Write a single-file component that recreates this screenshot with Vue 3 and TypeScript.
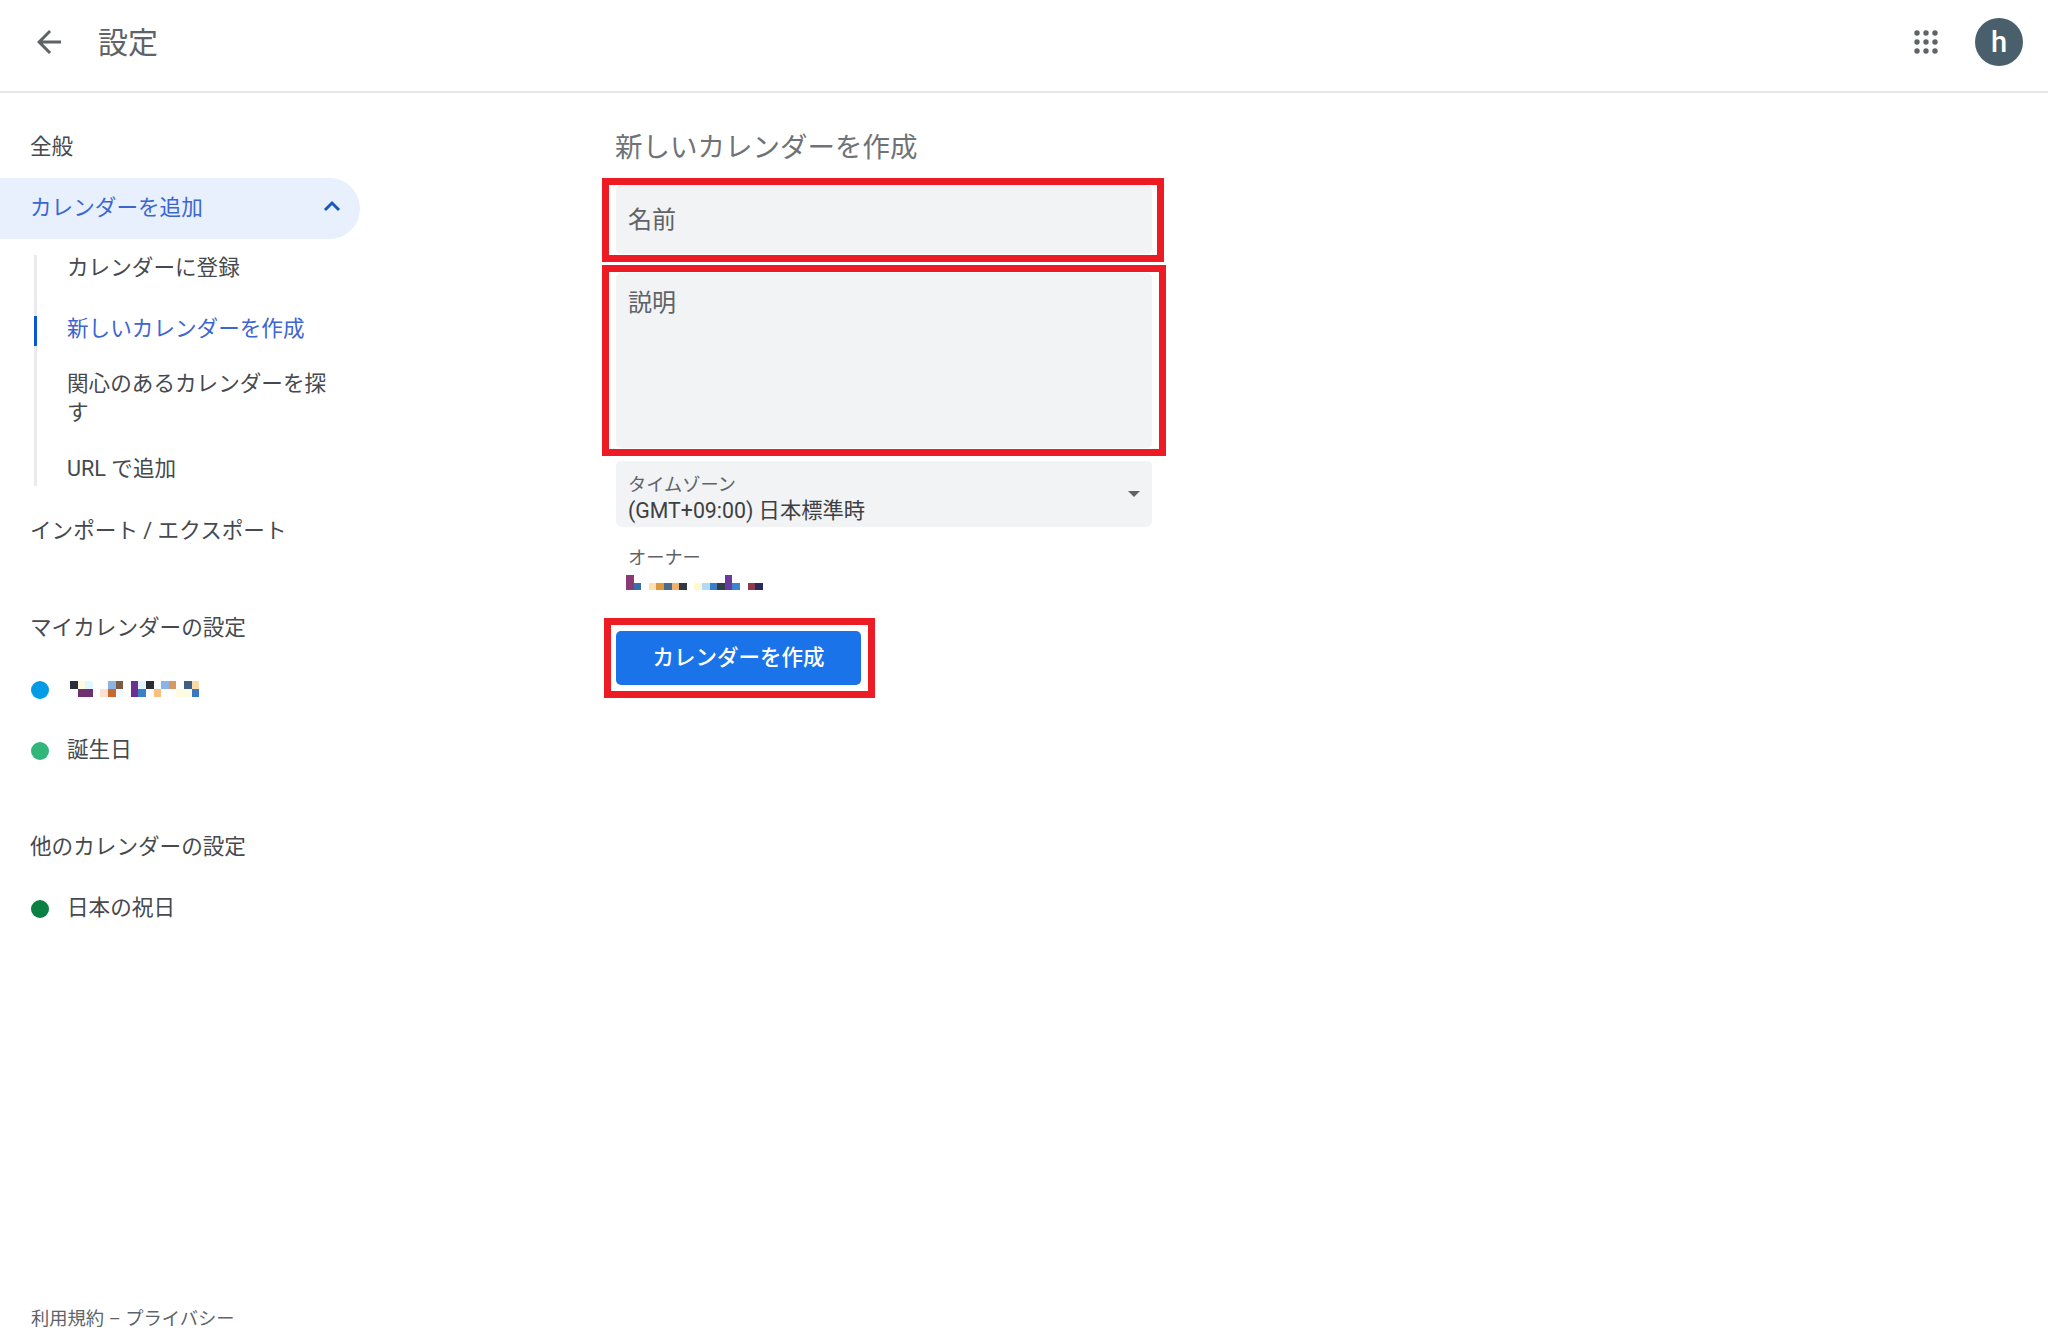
<script setup lang="ts">
type Row = (string | null)[]

const sideMosaic: Row[] = [
  ['#2a3038','#fffbe0','#e0f8ff',null,null,'#8ab4e0','#7a5a40',null,'#6b2f90','#e0f5ff','#2a2d33',null,'#8ab4e5','#d9985f',null,'#3f5f85','#fad9a8'],
  [null,'#6f2f70','#6f2f70',null,'#fde0d0','#c86a30','#f0fbff',null,'#6b2f90','#3a80c8',null,'#f8c080',null,null,'#fffbe0','#fffbe0','#3a78c0'],
]
const ownerMosaic: Row[] = [
  ['#8a3a75',null,null,null,null,null,null,null,null,null,null,null,null,'#6b3a9e',null,null,null,null],
  ['#8a3a75','#3b6cb0',null,'#fde2b0','#e0953f','#4a6a90','#f0b070','#2f3a40',null,'#fff9cc','#b0daf8','#3a80c8','#333f48','#6b3a9e','#3a85d0',null,'#8f3a4a','#2a2a60'],
]
const subItems = [
  { label: 'カレンダーに登録', active: false },
  { label: '新しいカレンダーを作成', active: true },
  { label: '関心のあるカレンダーを探す', active: false },
  { label: 'URL で追加', active: false },
]
const dots = Array.from({ length: 9 }, (_, i) => ({ cx: 3 + (i % 3) * 9, cy: 3 + Math.floor(i / 3) * 9 }))
</script>

<template>
  <div class="page">
    <header class="top">
      <button class="back" aria-label="戻る">
        <svg width="36" height="36" viewBox="0 0 24 24"><path fill="#5f6368" d="M20 11H7.83l5.59-5.59L12 4l-8 8 8 8 1.41-1.41L7.83 13H20v-2z" /></svg>
      </button>
      <h1 class="page-title">設定</h1>
      <div class="top-right">
        <svg class="apps" width="24" height="24" viewBox="0 0 24 24">
          <circle v-for="(d, i) in dots" :key="i" :cx="d.cx" :cy="d.cy" r="2.7" fill="#5f6368" />
        </svg>
        <div class="avatar">h</div>
      </div>
    </header>

    <div class="body">
      <aside class="side">
        <nav>
          <div class="item">全般</div>
          <div class="item open">
            <span>カレンダーを追加</span>
            <svg class="chev" width="18" height="12" viewBox="0 0 18 12"><path d="M2 10l7-7 7 7" fill="none" stroke="#185abc" stroke-width="3" /></svg>
          </div>
          <div class="sub">
            <div v-for="s in subItems" :key="s.label" class="sub-item" :class="{ active: s.active }">
              <span>{{ s.label }}</span>
            </div>
          </div>
          <div class="item">インポート / エクスポート</div>

          <div class="item section-first">マイカレンダーの設定</div>
          <div class="item cal">
            <i class="dot blue"></i>
            <div class="mosaic">
              <template v-for="(row, r) in sideMosaic" :key="r">
                <b v-for="(c, k) in row" :key="k" :style="{ background: c ?? 'transparent' }"></b>
              </template>
            </div>
          </div>
          <div class="item cal"><i class="dot green"></i><span>誕生日</span></div>

          <div class="item section-other">他のカレンダーの設定</div>
          <div class="item cal"><i class="dot dark"></i><span>日本の祝日</span></div>
        </nav>
        <footer class="foot">利用規約 – プライバシー</footer>
      </aside>

      <main class="main">
        <h2 class="heading">新しいカレンダーを作成</h2>

        <div class="marked name-wrap">
          <input class="field name" placeholder="名前" />
          <div class="mark mark-name"></div>
        </div>
        <div class="marked desc-wrap">
          <textarea class="field desc" placeholder="説明"></textarea>
          <div class="mark mark-desc"></div>
        </div>

        <div class="select">
          <div class="select-text">
            <div class="small">タイムゾーン</div>
            <div class="value">(GMT+09:00) 日本標準時</div>
          </div>
          <span class="caret"></span>
        </div>

        <div class="owner">
          <div class="small">オーナー</div>
          <div class="mosaic owner-mosaic">
            <template v-for="(row, r) in ownerMosaic" :key="r">
              <b v-for="(c, k) in row" :key="k" :style="{ background: c ?? 'transparent' }"></b>
            </template>
          </div>
        </div>

        <div class="marked btn-wrap">
          <button class="create">カレンダーを作成</button>
          <div class="mark mark-btn"></div>
        </div>
      </main>
    </div>
  </div>
</template>

<style>
html, body { margin: 0; background: #fff; }
</style>

<style scoped>
.page {
  width: 2048px;
  height: 1336px;
  display: flex;
  flex-direction: column;
  overflow: hidden;
  color: #46494d;
  font-family: Roboto, "Noto Sans CJK JP", sans-serif;
  font-size: 21.6px;
}
.top {
  height: 83px;
  flex: none;
  display: flex;
  align-items: center;
  border-bottom: 2px solid #e3e5e7;
  box-sizing: content-box;
  padding: 0 25px 8px 31px;
}
.back { width: 36px; height: 36px; padding: 0; border: 0; background: none; display: block; }
.back svg { display: block; }
.page-title { margin: 0 0 4px 31px; font-size: 30px; font-weight: 400; color: #5f6368; }
.top-right { margin-left: auto; display: flex; align-items: center; gap: 37px; }
.apps { display: block; }
.avatar {
  width: 48px;
  height: 48px;
  border-radius: 50%;
  background: #4a5f6c;
  color: #fff;
  font-size: 29px;
  font-weight: 500;
  display: flex;
  align-items: center;
  justify-content: center;
}
.body { flex: 1; display: flex; min-height: 0; }
.side {
  width: 360px;
  flex: none;
  display: flex;
  flex-direction: column;
  padding-top: 24px;
  box-sizing: border-box;
}
.item {
  height: 61px;
  display: flex;
  align-items: center;
  padding: 0 0 6px 30px;
  box-sizing: border-box;
}
.open {
  background: #e8f0fe;
  color: #3b66d1;
  border-radius: 0 31px 31px 0;
  justify-content: space-between;
  padding-right: 19px;
}
.chev { display: block; }
.sub { position: relative; }
.sub::before {
  content: "";
  position: absolute;
  left: 34px;
  top: 16px;
  bottom: 15px;
  width: 3px;
  background: #e8eaed;
}
.sub-item {
  position: relative;
  min-height: 61px;
  box-sizing: border-box;
  padding: 8px 25px 13px 67px;
  display: flex;
  align-items: center;
  line-height: 29px;
}
.sub-item.active { color: #3b66d1; }
.sub-item.active::before {
  content: "";
  position: absolute;
  left: 34px;
  top: 16px;
  height: 30px;
  width: 3px;
  background: #0b57d0;
}
.section-first { margin-top: 36px; }
.section-other { margin-top: 36px; }
.cal { gap: 18px; padding: 0 0 0 31px; }
.cal span { margin-top: -6px; }
.dot { width: 18px; height: 18px; border-radius: 50%; flex: none; display: block; }
.blue { background: #039be5; }
.green { background: #33b679; }
.dark { background: #0b8043; }
.mosaic {
  display: grid;
  grid-template-columns: repeat(17, 7.6px);
  grid-auto-rows: 8px;
}
.cal .mosaic { margin: -2px 0 0 3px; }
.mosaic b { display: block; }
.owner-mosaic {
  grid-template-columns: repeat(18, 7.6px);
  grid-auto-rows: 7.5px;
  margin: 5px 0 0 -2px;
}
.foot {
  margin-top: auto;
  padding: 0 0 5px 31px;
  font-size: 18.3px;
  line-height: 24px;
  color: #5f6368;
}
.main {
  width: 536px;
  margin-left: 256px;
  padding-top: 23px;
}
.heading {
  margin: 0 0 8px -1px;
  height: 61px;
  box-sizing: border-box;
  padding-bottom: 4px;
  display: flex;
  align-items: center;
  font-size: 27.5px;
  font-weight: 400;
  color: #6f7377;
}
.marked { position: relative; }
.mark {
  position: absolute;
  border: 7px solid #ed1c24;
  pointer-events: none;
}
.mark-name { left: -14px; right: -12px; top: -7px; bottom: -8px; }
.mark-desc { left: -14px; right: -14px; top: -8px; bottom: -8px; }
.mark-btn { left: -12px; right: -14px; top: -13px; bottom: -13px; }
.name-wrap { height: 69px; margin-bottom: 19px; }
.desc-wrap { height: 175px; margin-bottom: 13px; }
.field {
  display: block;
  width: 100%;
  height: 100%;
  box-sizing: border-box;
  border: 0;
  outline: 0;
  background: #f1f3f4;
  border-radius: 5px;
  padding: 0 12px;
  margin: 0;
  font-family: inherit;
  font-size: 24px;
  color: #3c4043;
  resize: none;
}
.desc { padding-top: 13px; line-height: 34px; }
.field::placeholder { color: #5f6368; opacity: 1; }
.select {
  height: 66px;
  background: #f1f3f4;
  border-radius: 5px 5px 6px 6px;
  display: flex;
  align-items: flex-start;
  justify-content: space-between;
  padding: 11px 12px 0;
  box-sizing: border-box;
}
.small { font-size: 18.2px; line-height: 25px; color: #5f6368; }
.value { font-size: 21.3px; line-height: 27px; color: #3c4043; }
.caret {
  width: 0;
  height: 0;
  margin-top: 19px;
  border-left: 6px solid transparent;
  border-right: 6px solid transparent;
  border-top: 6px solid #5f6368;
}
.owner { padding: 18px 12px 0; height: 104px; box-sizing: border-box; }
.btn-wrap { width: 245px; height: 54px; }
.create {
  display: block;
  width: 100%;
  height: 100%;
  padding: 0 0 5px;
  border: 0;
  border-radius: 5px;
  background: #1a73e8;
  color: #fff;
  font-family: inherit;
  font-size: 21.5px;
  font-weight: 500;
}
</style>
